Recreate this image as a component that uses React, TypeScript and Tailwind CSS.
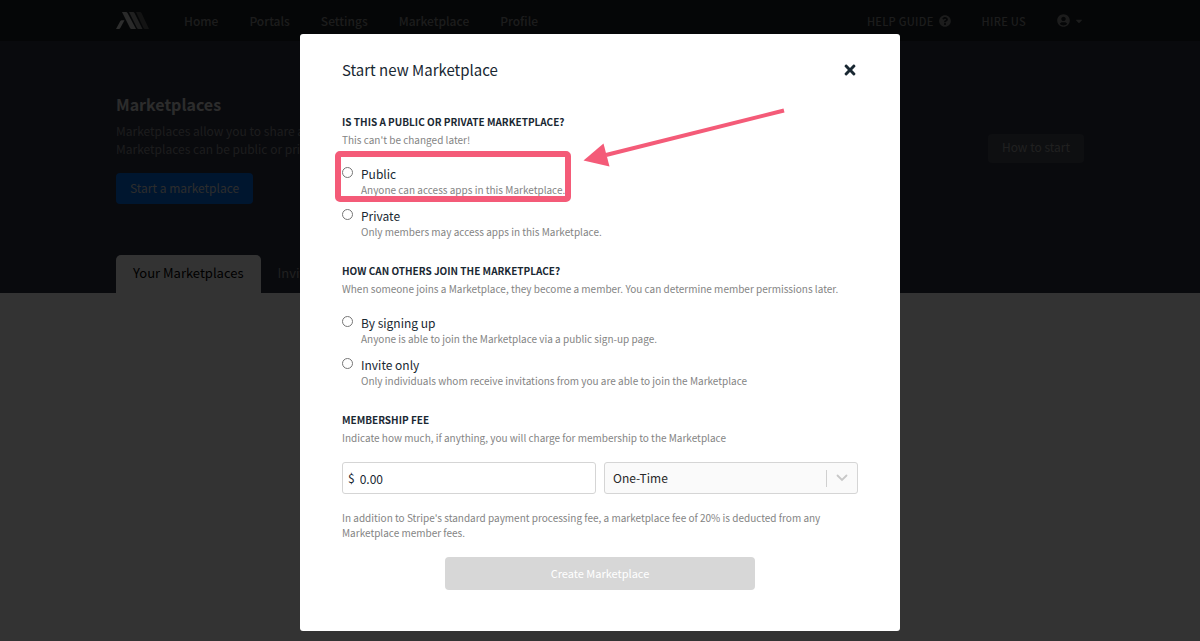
import React from 'react';
import { FaCaretDown, FaQuestionCircle, FaTimes, FaUserCircle } from 'react-icons/fa';

type Choice = { value: string; label: string; hint: string };

const visibility: Choice[] = [
  { value: 'public', label: 'Public', hint: 'Anyone can access apps in this Marketplace.' },
  { value: 'private', label: 'Private', hint: 'Only members may access apps in this Marketplace.' },
];

const joining: Choice[] = [
  { value: 'signup', label: 'By signing up', hint: 'Anyone is able to join the Marketplace via a public sign-up page.' },
  {
    value: 'invite',
    label: 'Invite only',
    hint: 'Only individuals whom receive invitations from you are able to join the Marketplace',
  },
];

function Logo() {
  return (
    <svg width="33" height="18" viewBox="0 0 33 18" aria-hidden="true">
      <path d="M4.2 9.2Q4.800 8.200 5.800 8.200H8.500L4.300 16Q3.800 17 2.800 17H0Z" fill="#e0e0e0" />
      <path d="M6 0H10Q11 0 11.500 .9L20 17H15.500Q14.500 17 14 16Z" fill="#d2d2d2" />
      <path d="M13 0H17Q18 0 18.500 .9L26.500 17H22.500Q21.500 17 21 16Z" fill="#a0a0a0" />
      <path d="M20 0H24Q25 0 25.500 .9L33 17H29Q28 17 27.500 16Z" fill="#5f5f5f" />
    </svg>
  );
}

function NavBar() {
  return (
    <header className="bg-[#191e23]">
      <div className="mx-auto flex h-[41px] max-w-[968px] items-center text-[#8c8c8c]">
        <Logo />
        <nav className="ml-[35px] flex gap-[31px] text-[12px] leading-4 font-medium">
          <a href="#home">Home</a>
          <a href="#portals">Portals</a>
          <a href="#settings">Settings</a>
          <a href="#marketplace">Marketplace</a>
          <a href="#profile">Profile</a>
        </nav>
        <div className="ml-auto flex items-center gap-[31px] text-[11px] leading-4 font-medium tracking-wide">
          <a href="#help" className="flex items-center gap-[5px]">
            HELP GUIDE <FaQuestionCircle size={12} />
          </a>
          <a href="#hire">HIRE US</a>
          <button type="button" aria-label="Account" className="flex items-center gap-1">
            <FaUserCircle size={13} />
            <FaCaretDown size={10} />
          </button>
        </div>
      </div>
    </header>
  );
}

function Hero() {
  return (
    <section className="bg-[#2d3241]">
      <div className="mx-auto max-w-[968px] pt-[51px]">
        <div className="flex items-center justify-between">
          <div>
            <h1 className="text-[16px] leading-6 font-bold text-[#dcdcdc]">Marketplaces</h1>
            <p className="mt-1.5 text-[12px] leading-[18px] whitespace-nowrap text-[#8c8c91]">
              Marketplaces allow you to share apps.
              <br />
              Marketplaces can be public or private.
            </p>
            <button
              type="button"
              className="mt-[15px] h-[31px] rounded-sm bg-[#006eeb] px-3.5 pb-0.5 text-[12px] leading-4 text-[#dcdcdc]"
            >
              Start a marketplace
            </button>
          </div>
          <button
            type="button"
            className="h-[29px] rounded-sm bg-[#464b55] px-3.5 pb-0.5 text-[12px] leading-4 text-[#a0a0a0]"
          >
            How to start
          </button>
        </div>
        <div className="mt-[51px] flex text-[13px] leading-5">
          <button type="button" className="h-[38px] rounded-t-[5px] bg-white px-[17px] pb-0.5 text-black">
            Your Marketplaces
          </button>
          <button type="button" className="h-[38px] px-[17px] pb-0.5 text-[#a0a0a0]">
            Invites
          </button>
        </div>
      </div>
    </section>
  );
}

function Heading({ title, children }: { title: string; children: React.ReactNode }) {
  return (
    <>
      <h3 className="text-[10px] leading-[18px] font-bold uppercase">{title}</h3>
      <p className="text-[10px] leading-[18px] text-[#848484]">{children}</p>
    </>
  );
}

function Choices({ name, items }: { name: string; items: Choice[] }) {
  return (
    <div className="mt-4 flex flex-col gap-2.5">
      {items.map((item) => (
        <label key={item.value} className="flex items-start gap-2">
          <input
            type="radio"
            name={name}
            value={item.value}
            className="mt-0.5 size-[11px] shrink-0 appearance-none rounded-full border border-[#767676] bg-white checked:border-4"
          />
          <span className="flex flex-col">
            <span className="text-[12px] leading-[18px]">{item.label}</span>
            <span className="text-[10px] leading-[14px] text-[#848484]">{item.hint}</span>
          </span>
        </label>
      ))}
    </div>
  );
}

function Callout() {
  return (
    <>
      <div className="pointer-events-none absolute top-[117px] left-[35px] h-[51px] w-[236px] rounded-[5px] border-[6px] border-[#f45b78]" />
      <svg
        className="pointer-events-none absolute top-[74px] left-[282px]"
        width="206"
        height="62"
        viewBox="0 0 206 62"
        aria-hidden="true"
      >
        <path d="M24 47L202 2.500" stroke="#f45b78" strokeWidth="4" />
        <path d="M1.500 52.500L21.500 35.500L27.500 58.500Z" fill="#f45b78" />
      </svg>
    </>
  );
}

function MarketplaceDialog() {
  return (
    <div className="fixed inset-0 flex items-start justify-center overflow-hidden bg-black/80 pt-[34px]">
      <div
        role="dialog"
        aria-labelledby="dialog-title"
        className="relative w-full max-w-[600px] rounded-[3px] bg-white px-[42px] pt-6 pb-[41px] text-[#192832]"
      >
        <div className="flex items-center justify-between">
          <h2 id="dialog-title" className="text-[15px] leading-6">
            Start new Marketplace
          </h2>
          <button type="button" aria-label="Close">
            <FaTimes size={16} />
          </button>
        </div>

        <form>
          <section className="mt-[31px]">
            <Heading title="Is this a public or private marketplace?">This can't be changed later!</Heading>
            <Choices name="visibility" items={visibility} />
          </section>

          <section className="mt-[23px]">
            <Heading title="How can others join the marketplace?">
              When someone joins a Marketplace, they become a member. You can determine member permissions later.
            </Heading>
            <Choices name="joining" items={joining} />
          </section>

          <section className="mt-[23px]">
            <Heading title="Membership fee">
              Indicate how much, if anything, you will charge for membership to the Marketplace
            </Heading>
            <div className="mt-[15px] grid grid-cols-2 gap-2 text-[12px] leading-4">
              <label className="flex h-8 items-center gap-[5px] rounded-[3px] border border-[#d5d5d5] px-[5px]">
                $
                <input
                  type="text"
                  aria-label="Membership fee"
                  defaultValue="0.00"
                  className="h-full w-full min-w-0 bg-transparent outline-none"
                />
              </label>
              <div className="relative">
                <select
                  aria-label="Billing period"
                  className="h-8 w-full appearance-none rounded-[3px] border border-[#d5d5d5] bg-[#fafafa] px-2 text-[#282828] outline-none"
                >
                  <option>One-Time</option>
                  <option>Monthly</option>
                </select>
                <div className="pointer-events-none absolute inset-y-0 right-2.5 flex items-center gap-[9px]">
                  <span className="h-[17px] w-px bg-[#d0d0d0]" />
                  <svg width="12" height="8" viewBox="0 0 12 8" fill="none" aria-hidden="true">
                    <path d="M1.500 1.500L6 6L10.500 1.500" stroke="#c8c8c8" strokeWidth="1.800" strokeLinecap="round" />
                  </svg>
                </div>
              </div>
            </div>
            <p className="mt-4 max-w-[480px] text-[10px] leading-[15px] text-[#848484]">
              In addition to Stripe's standard payment processing fee, a marketplace fee of 20% is deducted from any
              Marketplace member fees.
            </p>
          </section>

          <button
            type="button"
            className="mx-auto mt-[17px] block h-[33px] w-3/5 rounded-sm bg-[#d7d7d7] pb-0.5 text-[11px] leading-4 text-white"
          >
            Create Marketplace
          </button>
        </form>
        <Callout />
      </div>
    </div>
  );
}

export default function App() {
  return (
    <div className="min-h-screen bg-white font-['Noto_Sans_CJK_SC',sans-serif]">
      <NavBar />
      <Hero />
      <MarketplaceDialog />
    </div>
  );
}
